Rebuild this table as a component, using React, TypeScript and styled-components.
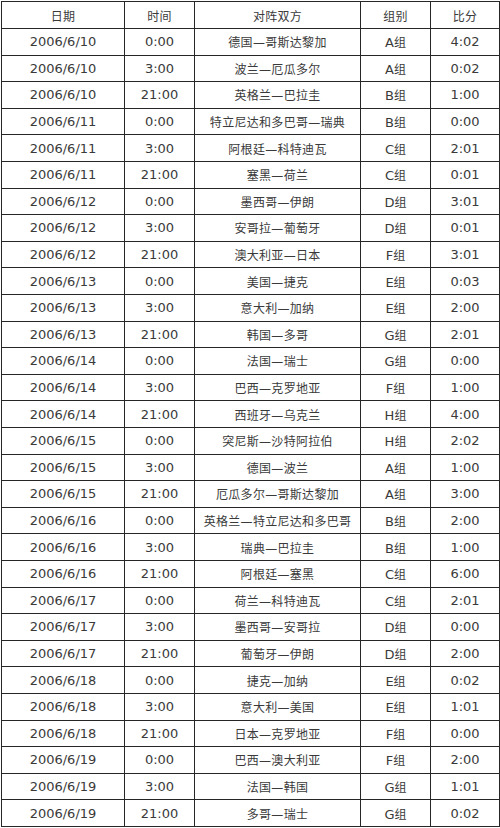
import React from "react";
import styled, { createGlobalStyle } from "styled-components";

const Global = createGlobalStyle`
  html, body { margin: 0; padding: 0; background: #ffffff; }
  #root { width: 500px; height: 828px; }
`;

const Table = styled.div`
  box-sizing: border-box;
  margin: 1px 0 0 1px;
  width: 499px;
  height: 826px;
  padding: 1px;
  background: #262626;
  display: grid;
  grid-template-columns: 122px 69px 165px 69px 68px;
  grid-template-rows: 26px repeat(30, 1fr);
  gap: 1px;
`;

const Cell = styled.div<{ $cjk?: boolean }>`
  background: #ffffff;
  display: flex;
  align-items: center;
  justify-content: center;
  color: #3a3a3a;
  font-family: "DejaVu Sans", "Noto Sans CJK SC", sans-serif;
  font-size: ${(p) => (p.$cjk ? "12px" : "13px")};
  letter-spacing: ${(p) => (p.$cjk ? "0.3px" : "0")};
  white-space: nowrap;
  overflow: hidden;
`;

const Group = styled.span`
  font-size: 13px;
  & > i {
    font-style: normal;
    font-size: 12px;
  }
`;

type Row = [string, string, string, string, string];

const rows: Row[] = [
  ["2006/6/10", "0:00", "德国—哥斯达黎加", "A", "4:02"],
  ["2006/6/10", "3:00", "波兰—厄瓜多尔", "A", "0:02"],
  ["2006/6/10", "21:00", "英格兰—巴拉圭", "B", "1:00"],
  ["2006/6/11", "0:00", "特立尼达和多巴哥—瑞典", "B", "0:00"],
  ["2006/6/11", "3:00", "阿根廷—科特迪瓦", "C", "2:01"],
  ["2006/6/11", "21:00", "塞黑—荷兰", "C", "0:01"],
  ["2006/6/12", "0:00", "墨西哥—伊朗", "D", "3:01"],
  ["2006/6/12", "3:00", "安哥拉—葡萄牙", "D", "0:01"],
  ["2006/6/12", "21:00", "澳大利亚—日本", "F", "3:01"],
  ["2006/6/13", "0:00", "美国—捷克", "E", "0:03"],
  ["2006/6/13", "3:00", "意大利—加纳", "E", "2:00"],
  ["2006/6/13", "21:00", "韩国—多哥", "G", "2:01"],
  ["2006/6/14", "0:00", "法国—瑞士", "G", "0:00"],
  ["2006/6/14", "3:00", "巴西—克罗地亚", "F", "1:00"],
  ["2006/6/14", "21:00", "西班牙—乌克兰", "H", "4:00"],
  ["2006/6/15", "0:00", "突尼斯—沙特阿拉伯", "H", "2:02"],
  ["2006/6/15", "3:00", "德国—波兰", "A", "1:00"],
  ["2006/6/15", "21:00", "厄瓜多尔—哥斯达黎加", "A", "3:00"],
  ["2006/6/16", "0:00", "英格兰—特立尼达和多巴哥", "B", "2:00"],
  ["2006/6/16", "3:00", "瑞典—巴拉圭", "B", "1:00"],
  ["2006/6/16", "21:00", "阿根廷—塞黑", "C", "6:00"],
  ["2006/6/17", "0:00", "荷兰—科特迪瓦", "C", "2:01"],
  ["2006/6/17", "3:00", "墨西哥—安哥拉", "D", "0:00"],
  ["2006/6/17", "21:00", "葡萄牙—伊朗", "D", "2:00"],
  ["2006/6/18", "0:00", "捷克—加纳", "E", "0:02"],
  ["2006/6/18", "3:00", "意大利—美国", "E", "1:01"],
  ["2006/6/18", "21:00", "日本—克罗地亚", "F", "0:00"],
  ["2006/6/19", "0:00", "巴西—澳大利亚", "F", "2:00"],
  ["2006/6/19", "3:00", "法国—韩国", "G", "1:01"],
  ["2006/6/19", "21:00", "多哥—瑞士", "G", "0:02"],
];

const headers = ["日期", "时间", "对阵双方", "组别", "比分"];

export default function App() {
  return (
    <>
      <Global />
      <Table>
        {headers.map((h) => (
          <Cell key={h} $cjk>
            {h}
          </Cell>
        ))}
        {rows.map((r, i) => (
          <React.Fragment key={i}>
            <Cell>{r[0]}</Cell>
            <Cell>{r[1]}</Cell>
            <Cell $cjk>{r[2]}</Cell>
            <Cell>
              <Group>
                {r[3]}
                <i>组</i>
              </Group>
            </Cell>
            <Cell>{r[4]}</Cell>
          </React.Fragment>
        ))}
      </Table>
    </>
  );
}
